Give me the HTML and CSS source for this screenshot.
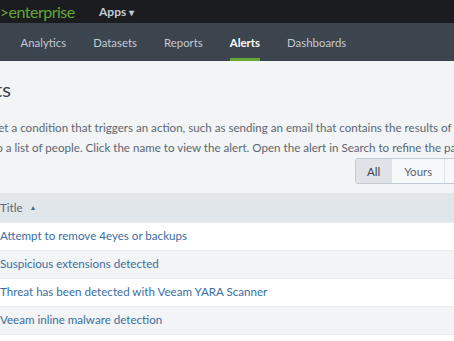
FILE: index.html
```html
<!DOCTYPE html>
<html lang="en">
<head>
    <meta charset="UTF-8">
    <meta name="viewport" content="width=device-width, initial-scale=1.0">
    <title>Alerts | Splunk</title>
    <link rel="stylesheet" href="styles.css">
</head>
<body>
    <header class="topbar">
        <div class="brand"><span class="brand-splunk">splunk</span><span class="brand-product">&gt;enterprise</span></div>
        <div class="apps-menu">Apps <span class="caret">&#9662;</span></div>
    </header>

    <nav class="appnav">
        <a class="nav-item">Search</a>
        <a class="nav-item">Analytics</a>
        <a class="nav-item">Datasets</a>
        <a class="nav-item">Reports</a>
        <a class="nav-item active">Alerts</a>
        <a class="nav-item">Dashboards</a>
    </nav>

    <main class="page">
        <h2 class="page-title">Alerts</h2>
        <p class="page-desc">Set a condition that triggers an action, such as sending an email that contains the results of the triggering search to a list of people. Click the name to view the alert. Open the alert in Search to refine the parameters.</p>

        <div class="toolbar">
            <div class="btn-group">
                <button class="btn active">All</button>
                <button class="btn">Yours</button>
                <button class="btn">This App's</button>
            </div>
        </div>

        <table class="alerts-table">
            <thead>
                <tr><th>Title <span class="sort">&#9650;</span></th></tr>
            </thead>
            <tbody>
                <tr><td><a>Attempt to remove 4eyes or backups</a></td></tr>
                <tr><td><a>Suspicious extensions detected</a></td></tr>
                <tr><td><a>Threat has been detected with Veeam YARA Scanner</a></td></tr>
                <tr><td><a>Veeam inline malware detection</a></td></tr>
                <tr><td><a>&nbsp;</a></td></tr>
            </tbody>
        </table>
    </main>
</body>
</html>
```

FILE: styles.css
```css
html, body {
    margin: 0;
    padding: 0;
}
body {
    font-family: Lato, "Open Sans", sans-serif;
    background-color: #f2f4f5;
    overflow: hidden;
    width: 454px;
    height: 341px;
}
.topbar {
    height: 23px;
    background-color: #1a1c20;
    display: flex;
    align-items: center;
    white-space: nowrap;
}
.brand {
    font-size: 16px;
    font-weight: 700;
    margin-left: -47px;
    width: 146px;
    flex-shrink: 0;
}
.brand-splunk {
    color: #fff;
}
.brand-product {
    color: #65a637;
    font-weight: 400;
    letter-spacing: -0.5px;
}
.apps-menu {
    color: #c3cbd4;
    font-size: 12px;
    font-weight: 700;
}
.caret {
    font-size: 10px;
}
.appnav {
    height: 38px;
    background-color: #3c444d;
    display: flex;
    align-items: stretch;
    margin-left: -40px;
    gap: 27px;
    white-space: nowrap;
}
.nav-item {
    color: #c3cbd4;
    font-size: 11.4px;
    display: flex;
    align-items: center;
    border-bottom: 3px solid transparent;
    padding-top: 3px;
}
.nav-item.active {
    color: #fff;
    font-weight: 700;
    border-bottom-color: #65a637;
}
.page {
    margin-left: -8px;
    width: 620px;
}
.page-title {
    font-size: 20px;
    font-weight: 400;
    color: #3c444d;
    margin: 16px 0 0 -33px;
    line-height: 24px;
}
.page-desc {
    font-size: 11.6px;
    color: #5c6773;
    line-height: 20px;
    margin: 17px 0 0;
    width: 575px;
}
.toolbar {
    display: flex;
    margin-top: 0;
    padding-left: 363px;
}
.btn-group {
    display: flex;
    border: 1px solid #c3cbd4;
    border-radius: 3px;
    overflow: hidden;
}
.btn {
    font-family: inherit;
    font-size: 11.5px;
    color: #5c6773;
    background-color: #f7f8fa;
    border: none;
    border-left: 1px solid #dde2e6;
    height: 24px;
    padding: 0 12px;
}
.btn:first-child {
    border-left: none;
}
.btn.active {
    background-color: #dfe3e7;
    color: #3c444d;
    padding: 0 11px;
}
.alerts-table {
    border-collapse: collapse;
    width: 100%;
    margin-top: 9px;
    font-size: 11.6px;
}
.alerts-table th {
    background-color: #e1e6eb;
    color: #5c6773;
    font-weight: 400;
    text-align: left;
    height: 29px;
    padding: 0 0 0 8px;
}
.sort {
    font-size: 7px;
    color: #3c6c9c;
    margin-left: 4px;
    vertical-align: 2px;
}
.alerts-table td {
    height: 24px;
    padding: 0 0 3px 8px;
    border-top: 1px solid #e8ebee;
}
.alerts-table tbody tr:nth-child(odd) {
    background-color: #fff;
}
.alerts-table tbody tr:nth-child(even) {
    background-color: #f2f4f5;
}
.alerts-table a {
    color: #3b6e9e;
}
```
